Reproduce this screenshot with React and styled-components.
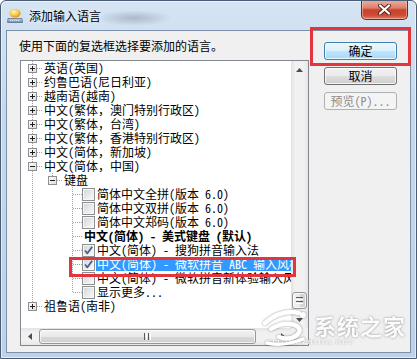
import React from 'react';
import styled, { createGlobalStyle } from 'styled-components';

const FONT = `"Noto Sans Mono CJK SC", "Noto Sans CJK SC", sans-serif`;

const GlobalStyle = createGlobalStyle`
  html, body {
    margin: 0;
    padding: 0;
    background: #fff;
  }
  body {
    width: 417px;
    height: 359px;
    overflow: hidden;
  }
  * {
    box-sizing: border-box;
  }
`;

const Window = styled.div`
  position: relative;
  width: 417px;
  height: 359px;
  display: flex;
  flex-direction: column;
  padding: 0 5px 5px;
  border: 1px solid #4a5d74;
  border-radius: 6px 6px 0 0;
  background: linear-gradient(180deg, #d5e4f3 0%, #c6d9ec 30%, #bdd2e8 100%);
  box-shadow: inset 0 0 0 1px rgba(255, 255, 255, 0.55);
  font-family: ${FONT};
  font-size: 12px;
  color: #000;
  overflow: hidden;
`;

const TitleBar = styled.div`
  height: 29px;
  flex: none;
  display: flex;
  align-items: center;
  padding-left: 1px;
  background: radial-gradient(ellipse 38px 8px at 128px 17px, rgba(70, 80, 100, 0.28), transparent);
`;

const TitleText = styled.span`
  margin-left: 6px;
  font-size: 12px;
  line-height: 16px;
  color: #000;
  text-shadow: 0 0 6px rgba(255, 255, 255, 0.9);
`;

const CloseButton = styled.div`
  align-self: flex-start;
  margin: -1px 3px 0 auto;
  width: 47px;
  height: 20px;
  display: flex;
  align-items: center;
  justify-content: center;
  border: 1px solid #6d2a20;
  border-top: none;
  border-radius: 0 0 5px 5px;
  background: linear-gradient(180deg, #eab3a6 0%, #dc7f6c 42%, #c7422c 52%, #cd4a33 80%, #e1806a 100%);
  box-shadow: inset 0 0 0 1px rgba(255, 220, 210, 0.45);
`;

const Client = styled.div`
  flex: 1;
  display: flex;
  gap: 15px;
  padding: 7px 13px 6px 12px;
  background: #f0f0f0;
  border: 1px solid #7e91aa;
`;

const LeftColumn = styled.div`
  width: 290px;
  display: flex;
  flex-direction: column;
`;

const Prompt = styled.div`
  height: 16px;
  line-height: 16px;
  white-space: nowrap;
`;

const Tree = styled.div`
  margin: 6px 0 0 1px;
  width: 289px;
  height: 286px;
  border: 1px solid #828790;
  background: #fff;
  display: grid;
  grid-template-columns: 1fr 17px;
  grid-template-rows: 1fr 17px;
`;

const Rows = styled.div`
  overflow: hidden;
  padding-left: 1px;
`;

const Row = styled.div`
  height: 14px;
  display: flex;
  align-items: center;
  white-space: nowrap;
`;

const Label = styled.span`
  margin-left: 1px;
  padding: 0 2px 0 1px;
  height: 14px;
  line-height: 14px;
  font-weight: ${p => (p.$bold ? 700 : 400)};
  background: ${p => (p.$selected ? '#3399ff' : 'transparent')};
  color: ${p => (p.$selected ? '#fff' : '#000')};
`;

const Check = styled.span`
  flex: none;
  width: 13px;
  height: 13px;
  display: flex;
  align-items: center;
  justify-content: center;
  border: 1px solid #8e8f8f;
  background: linear-gradient(135deg, #d2d4d8 0%, #e9eaec 55%, #fbfbfb 100%);
  box-shadow: inset 0 0 0 1px #f6f6f6;
`;

const VScroll = styled.div`
  display: flex;
  flex-direction: column;
  background: linear-gradient(90deg, #e3e3e3 0%, #f1f1f1 25%, #f1f1f1 75%, #e6e6e6 100%);
`;

const HScroll = styled.div`
  display: flex;
  align-items: center;
  background: linear-gradient(180deg, #e3e3e3 0%, #f1f1f1 25%, #f1f1f1 75%, #e6e6e6 100%);
`;

const ArrowBox = styled.div`
  flex: none;
  width: 17px;
  height: 17px;
  display: flex;
  align-items: center;
  justify-content: center;
`;

const Track = styled.div`
  flex: 1;
`;

const Thumb = styled.div`
  flex: none;
  display: flex;
  align-items: center;
  justify-content: center;
  border: 1px solid #979797;
  border-radius: 3px;
  width: ${p => (p.$vertical ? '15px' : '217px')};
  height: ${p => (p.$vertical ? '17px' : '15px')};
  margin: ${p => (p.$vertical ? '0 1px 2px' : '0 0 0 1px')};
  background: ${p =>
    p.$vertical
      ? 'linear-gradient(90deg, #f3f3f3 0%, #e9e9e9 50%, #d9d9d9 51%, #d0d0d0 100%)'
      : 'linear-gradient(180deg, #f3f3f3 0%, #e9e9e9 50%, #d9d9d9 51%, #d0d0d0 100%)'};
  box-shadow: inset 0 0 0 1px rgba(255, 255, 255, 0.7);
`;

const Corner = styled.div`
  background: #f0f0f0;
`;

const RightColumn = styled.div`
  width: 73px;
  display: flex;
  flex-direction: column;
  gap: 7px;
  padding-top: 4px;
`;

const Button = styled.button`
  width: 73px;
  height: 18px;
  padding: 0;
  font-family: ${FONT};
  font-size: 12px;
  line-height: 14px;
  border-radius: 3px;
  border: 1px solid ${p => (p.disabled ? '#adb2b5' : p.$primary ? '#3c7fb1' : '#707070')};
  color: ${p => (p.disabled ? '#8d8d8d' : '#000')};
  background: ${p =>
    p.disabled
      ? '#f4f4f4'
      : p.$primary
      ? 'linear-gradient(180deg, #eaf6fd 0%, #d9f0fc 50%, #bee6fd 51%, #a7d9f5 100%)'
      : 'linear-gradient(180deg, #f2f2f2 0%, #ebebeb 50%, #dddddd 51%, #cfcfcf 100%)'};
  box-shadow: inset 0 0 0 1px ${p => (p.disabled ? 'transparent' : 'rgba(255, 255, 255, 0.75)')};
`;

const Callout = styled.div`
  position: absolute;
  left: ${p => p.$x}px;
  top: ${p => p.$y}px;
  width: ${p => p.$w}px;
  height: ${p => p.$h}px;
  border: 3px solid #e2353d;
  pointer-events: none;
`;

const Watermark = styled.div`
  position: absolute;
  left: 258px;
  top: 302px;
  display: flex;
  align-items: flex-start;
  gap: 1px;
  color: rgba(255, 255, 255, 0.95);
  filter: drop-shadow(0 0 1px rgba(60, 60, 60, 0.55));
  pointer-events: none;
`;

const MarkText = styled.div`
  display: flex;
  flex-direction: column;
  padding-top: 9px;
`;

const MarkTitle = styled.span`
  font-family: "Noto Sans CJK SC", sans-serif;
  font-size: 22px;
  font-weight: 700;
  line-height: 26px;
  letter-spacing: 1px;
`;

const MarkSub = styled.span`
  margin-left: -48px;
  font-family: "Liberation Serif", serif;
  font-size: 7px;
  line-height: 8px;
  letter-spacing: 1.5px;
  white-space: nowrap;
`;

const DOT = '#a0a0a0';

const GuideCell = ({ kind, expander }) => (
  <svg width="20" height="14" viewBox="0 0 20 14" shapeRendering="crispEdges" style={{ flex: 'none', display: 'block' }}>
    <defs>
      <linearGradient id="boxFill" x1="0" y1="0" x2="1" y2="1">
        <stop offset="0" stopColor="#ffffff" />
        <stop offset="1" stopColor="#dcdcdc" />
      </linearGradient>
    </defs>
    {(kind === 'pass' || kind === 'tee') && (
      <line x1="10.5" y1="0" x2="10.5" y2="14" stroke={DOT} strokeDasharray="1 1" />
    )}
    {kind === 'ell' && <line x1="10.5" y1="0" x2="10.5" y2="8" stroke={DOT} strokeDasharray="1 1" />}
    {(kind === 'tee' || kind === 'ell') && (
      <line x1="11" y1="7.5" x2="20" y2="7.5" stroke={DOT} strokeDasharray="1 1" />
    )}
    {expander && (
      <g>
        <rect x="6.5" y="3.5" width="8" height="8" fill="url(#boxFill)" stroke="#8f8f8f" />
        <line x1="8" y1="7.5" x2="13" y2="7.5" stroke="#1e1e1e" />
        {expander === 'plus' && <line x1="10.5" y1="5" x2="10.5" y2="10" stroke="#1e1e1e" />}
      </g>
    )}
  </svg>
);

const CheckMark = () => (
  <svg width="9" height="9" viewBox="0 0 9 9">
    <path d="M1 4.5 L3.4 7.3 L8.2 0.8" fill="none" stroke="#4b5f8c" strokeWidth="1.8" strokeLinejoin="round" />
  </svg>
);

const Arrow = ({ dir }) => {
  const shapes = {
    up: '0,4 3.5,0 7,4',
    down: '0,0 7,0 3.5,4',
    left: '4,0 4,7 0,3.5',
    right: '0,0 4,3.5 0,7',
  };
  const vertical = dir === 'up' || dir === 'down';
  return (
    <svg width={vertical ? 7 : 4} height={vertical ? 4 : 7}>
      <polygon points={shapes[dir]} fill="#4d4d4d" />
    </svg>
  );
};

const Grip = ({ vertical }) =>
  vertical ? (
    <svg width="7" height="7" shapeRendering="crispEdges">
      {[0, 2, 4, 6].map(y => (
        <line key={y} x1="0" y1={y + 0.5} x2="7" y2={y + 0.5} stroke={y % 4 === 0 ? '#5a5a5a' : '#ffffff'} />
      ))}
    </svg>
  ) : (
    <svg width="7" height="7" shapeRendering="crispEdges">
      {[0, 2, 4, 6].map(x => (
        <line key={x} x1={x + 0.5} y1="0" x2={x + 0.5} y2="7" stroke={x % 4 === 0 ? '#5a5a5a' : '#ffffff'} />
      ))}
    </svg>
  );

const AppIcon = () => (
  <svg width="16" height="16" viewBox="0 0 16 16">
    <defs>
      <radialGradient id="bubble" cx="0.4" cy="0.35" r="0.7">
        <stop offset="0" stopColor="#fff6b8" />
        <stop offset="0.6" stopColor="#f4c542" />
        <stop offset="1" stopColor="#d98a12" />
      </radialGradient>
      <linearGradient id="board" x1="0" y1="0" x2="0" y2="1">
        <stop offset="0" stopColor="#c9d6e6" />
        <stop offset="1" stopColor="#6f88a8" />
      </linearGradient>
    </defs>
    <ellipse cx="8" cy="5.2" rx="5.6" ry="4.2" fill="url(#bubble)" />
    <path d="M1 10.5 L15 10.5 L15.5 14.5 L0.5 14.5 Z" fill="url(#board)" stroke="#4d6585" strokeWidth="0.7" />
    <path d="M3 12.5 H13" stroke="#e9eef5" strokeWidth="0.8" strokeDasharray="1.2 0.8" />
  </svg>
);

const CloseGlyph = () => (
  <svg width="13" height="11" viewBox="0 0 13 11">
    <path d="M2 1.5 L11 9.5 M11 1.5 L2 9.5" stroke="#5a1f17" strokeWidth="4" strokeLinecap="round" />
    <path d="M2 1.5 L11 9.5 M11 1.5 L2 9.5" stroke="#ffffff" strokeWidth="2.2" strokeLinecap="round" />
  </svg>
);

const MarkLogo = () => (
  <svg width="54" height="46" viewBox="0 0 54 46">
    <g fill="none" stroke="#ffffff" strokeLinecap="round">
      <path d="M6 20 Q22 6 40 10" strokeWidth="4.5" />
      <path d="M12 26 Q24 18 36 22 Q44 26 38 32 Q30 38 20 34" strokeWidth="4.5" />
      <path d="M8 40 Q24 44 44 36" strokeWidth="3.5" />
    </g>
    <circle cx="44" cy="12" r="3" fill="#ffffff" />
  </svg>
);

const rows = [
  { guides: ['tee'], expander: 'plus', text: '英语(英国)' },
  { guides: ['tee'], expander: 'plus', text: '约鲁巴语(尼日利亚)' },
  { guides: ['tee'], expander: 'plus', text: '越南语(越南)' },
  { guides: ['tee'], expander: 'plus', text: '中文(繁体，澳门特别行政区)' },
  { guides: ['tee'], expander: 'plus', text: '中文(繁体，台湾)' },
  { guides: ['tee'], expander: 'plus', text: '中文(繁体，香港特别行政区)' },
  { guides: ['tee'], expander: 'plus', text: '中文(简体，新加坡)' },
  { guides: ['tee'], expander: 'minus', text: '中文(简体，中国)' },
  { guides: ['pass', 'ell'], expander: 'minus', text: '键盘' },
  { guides: ['pass', 'none', 'tee'], check: 'off', text: '简体中文全拼(版本 6.0)' },
  { guides: ['pass', 'none', 'tee'], check: 'off', text: '简体中文双拼(版本 6.0)' },
  { guides: ['pass', 'none', 'tee'], check: 'off', text: '简体中文郑码(版本 6.0)' },
  { guides: ['pass', 'none', 'tee'], bold: true, text: '中文(简体) - 美式键盘  (默认)' },
  { guides: ['pass', 'none', 'tee'], check: 'on', text: '中文(简体) - 搜狗拼音输入法' },
  { guides: ['pass', 'none', 'tee'], check: 'on', selected: true, text: '中文(简体) - 微软拼音 ABC 输入风格' },
  { guides: ['pass', 'none', 'tee'], check: 'off', text: '中文(简体) - 微软拼音新体验输入风格' },
  { guides: ['pass', 'none', 'ell'], check: 'off', text: '显示更多...' },
  { guides: ['ell'], expander: 'plus', text: '祖鲁语(南非)' },
];

export default function App() {
  return (
    <>
      <GlobalStyle />
      <Window>
        <TitleBar>
          <AppIcon />
          <TitleText>添加输入语言</TitleText>
          <CloseButton>
            <CloseGlyph />
          </CloseButton>
        </TitleBar>

        <Client>
          <LeftColumn>
            <Prompt>使用下面的复选框选择要添加的语言。</Prompt>
            <Tree>
              <Rows>
                {rows.map((row, i) => (
                  <Row key={i}>
                    {row.guides.map((kind, j) => (
                      <GuideCell
                        key={j}
                        kind={kind}
                        expander={j === row.guides.length - 1 ? row.expander : null}
                      />
                    ))}
                    {row.check && <Check>{row.check === 'on' && <CheckMark />}</Check>}
                    <Label $bold={row.bold} $selected={row.selected}>
                      {row.text}
                    </Label>
                  </Row>
                ))}
              </Rows>
              <VScroll>
                <ArrowBox>
                  <Arrow dir="up" />
                </ArrowBox>
                <Track />
                <Thumb $vertical>
                  <Grip vertical />
                </Thumb>
                <ArrowBox>
                  <Arrow dir="down" />
                </ArrowBox>
              </VScroll>
              <HScroll>
                <ArrowBox>
                  <Arrow dir="left" />
                </ArrowBox>
                <Thumb>
                  <Grip />
                </Thumb>
                <Track />
                <ArrowBox>
                  <Arrow dir="right" />
                </ArrowBox>
              </HScroll>
              <Corner />
            </Tree>
          </LeftColumn>

          <RightColumn>
            <Button $primary>确定</Button>
            <Button>取消</Button>
            <Button disabled>预览(P)...</Button>
          </RightColumn>
        </Client>

        <Callout $x={309} $y={26} $w={101} $h={39} />
        <Callout $x={68} $y={256} $w={227} $h={20} />

        <Watermark>
          <MarkLogo />
          <MarkText>
            <MarkTitle>系统之家</MarkTitle>
            <MarkSub>XITONGZHIJIA.NET</MarkSub>
          </MarkText>
        </Watermark>
      </Window>
    </>
  );
}
